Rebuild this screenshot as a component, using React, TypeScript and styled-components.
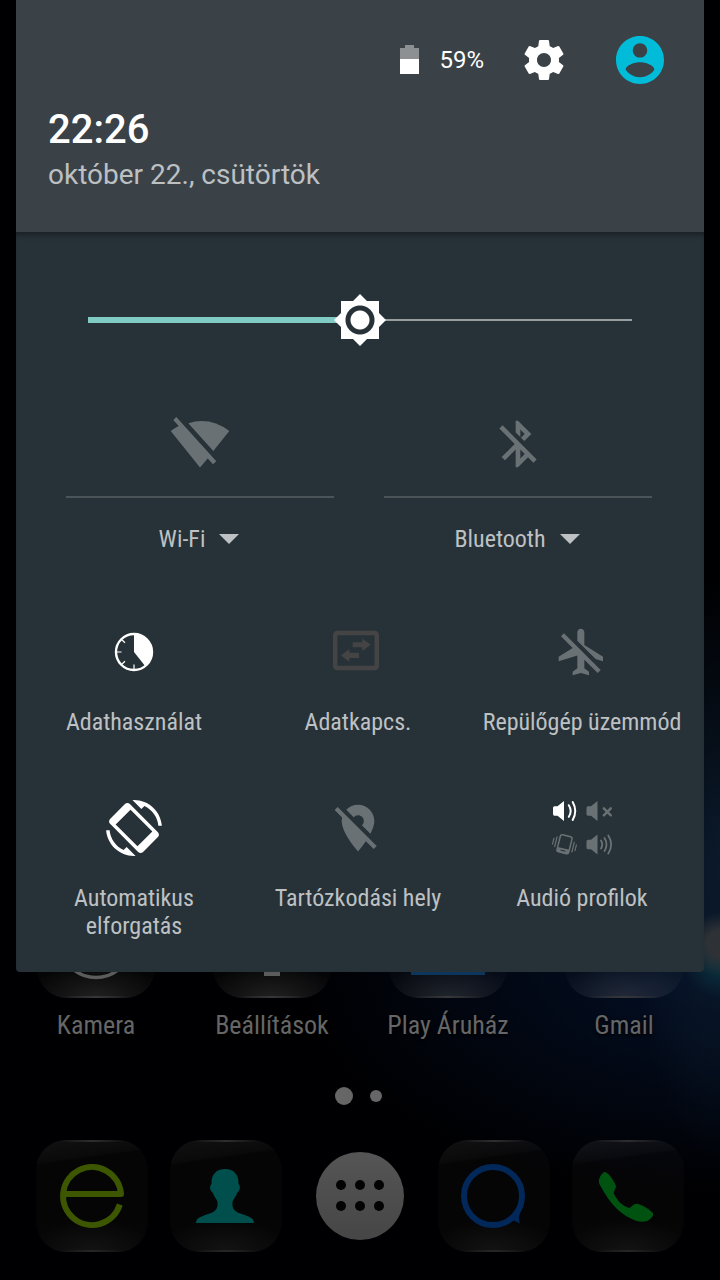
import React, { useState } from "react";
import styled, { createGlobalStyle } from "styled-components";

const colors = {
  header: "#3a4248",
  body: "#273238",
  accent: "#80cbc4",
  avatar: "#00bcd9",
  label: "#bec1c3",
  off: "#6a7174",
  unavailable: "#444445",
  launcher: "#666666",
};

const condensed = '"Roboto Condensed", Roboto, "Liberation Sans", sans-serif';

const GlobalStyle = createGlobalStyle`
  *, *::before, *::after { box-sizing: border-box; }
  body { margin: 0; background: #000; font-family: Roboto, "Liberation Sans", sans-serif; }
  button { margin: 0; padding: 0; border: 0; background: none; color: inherit; font: inherit; cursor: pointer; }
  svg { display: block; flex: none; }
`;

const Screen = styled.div`
  min-height: 100vh;
  display: flex;
  flex-direction: column;
  overflow: hidden;
  background:
    radial-gradient(circle 32px at 100% 944px, #2e3236 0 40%, transparent 100%),
    radial-gradient(circle 36px at 100% 962px, #0a2f3c 0 20%, transparent 100%),
    radial-gradient(ellipse 90px 290px at 100% 870px, #0b1a2b, transparent 100%),
    radial-gradient(ellipse 420px 220px at 100% 970px, #041027, transparent 100%),
    #000002;
`;

const Shade = styled.section`
  margin: 0 16px;
  border-radius: 0 0 4px 4px;
  overflow: hidden;
  background: ${colors.body};
`;

const ShadeHeader = styled.header`
  padding: 36px 40px 41px 32px;
  background: ${colors.header};
`;

const StatusRow = styled.div`
  display: flex;
  justify-content: flex-end;
  align-items: center;
  height: 48px;
`;

const Battery = styled.div`
  display: flex;
  align-items: center;
  gap: 20px;
  margin-right: 36px;
  color: #fff;
  font-size: 24px;
  line-height: 28px;
`;

const HeaderButton = styled.button`
  width: 48px;
  height: 48px;
  color: ${(p) => p.color};

  & + & { margin-left: 48px; }
`;

const Clock = styled.time`
  display: block;
  margin-top: 21px;
  color: #fff;
  font-size: 40px;
  font-weight: 500;
  line-height: 50px;
`;

const DateText = styled.div`
  margin-top: 4px;
  color: #bdc0c3;
  font-size: 28px;
  line-height: 32px;
`;

const ShadeBody = styled.div`
  padding: 62px 0 32px;
  box-shadow: inset 0 6px 6px -3px rgba(0, 0, 0, 0.35);
`;

const BrightnessRow = styled.div`
  padding: 0 72px;
`;

const BrightnessSlider = styled.input<{ $fill: number }>`
  appearance: none;
  display: block;
  width: 100%;
  height: 52px;
  margin: 0;
  background:
    linear-gradient(${colors.accent}, ${colors.accent}) left center / ${(p) => p.$fill}% 6px no-repeat,
    linear-gradient(#999ea1, #999ea1) left center / 100% 2px no-repeat;

  &::-webkit-slider-thumb {
    appearance: none;
    width: 52px;
    height: 52px;
    background: radial-gradient(circle, #fff 9px, ${colors.body} 10px, ${colors.body} 14px, #fff 15px);
    clip-path: polygon(
      26px 0, 33px 7px, 45px 7px, 45px 19px, 52px 26px, 45px 33px, 45px 45px, 33px 45px,
      26px 52px, 19px 45px, 7px 45px, 7px 33px, 0 26px, 7px 19px, 7px 7px, 19px 7px
    );
  }
`;

const DualTiles = styled.div`
  display: grid;
  grid-template-columns: 1fr 1fr;
  gap: 50px;
  margin-top: 66px;
  padding: 0 52px 0 50px;
`;

const DualTile = styled.div`
  display: flex;
  flex-direction: column;
  align-items: center;
`;

const DualToggle = styled.button`
  display: flex;
  justify-content: center;
  width: 100%;
  padding-bottom: 20px;
  border-bottom: 2px solid #4a5459;
`;

const DualLabel = styled.button`
  display: flex;
  align-items: center;
  gap: 14px;
  margin-top: 27px;
  padding-right: 2px;
  color: ${colors.label};
  font-family: ${condensed};
  font-size: 24px;
  line-height: 28px;
`;

const TileGrid = styled.div`
  display: grid;
  grid-template-columns: repeat(3, 1fr);
  row-gap: 60px;
  margin-top: 67px;
  padding: 0 10px 0 6px;
`;

const Tile = styled.button`
  display: flex;
  flex-direction: column;
  align-items: center;
  gap: 24px;
  padding: 0 8px;
`;

const IconBox = styled.span<{ $tone: string }>`
  display: flex;
  align-items: center;
  justify-content: center;
  width: 64px;
  height: 64px;
  color: ${(p) => p.$tone};
`;

const TileLabel = styled.span`
  color: ${colors.label};
  font-family: ${condensed};
  font-size: 24px;
  line-height: 28px;
`;

const AppRow = styled.div`
  display: grid;
  grid-template-columns: repeat(4, 1fr);
  padding: 0 8px;
`;

const AppShortcut = styled.button`
  display: flex;
  flex-direction: column;
  align-items: center;
  gap: 11px;
  color: ${colors.launcher};
  font-family: ${condensed};
  font-size: 26px;
  line-height: 32px;
  white-space: nowrap;
  text-shadow: 0 2px 3px #000;
`;

const IconPeek = styled.span`
  display: flex;
  align-items: flex-end;
  height: 26px;
  overflow: hidden;
`;

const GlassIcon = styled.span<{ $size: number; $sheen?: boolean }>`
  display: block;
  flex: none;
  width: ${(p) => p.$size}px;
  height: ${(p) => p.$size}px;
  border-radius: 30px;
  overflow: hidden;
  background:
    linear-gradient(90deg, transparent 20%, ${(p) => (p.$sheen ? "#262628" : "#38383a")} 50%, transparent 80%) bottom / 100% 2px no-repeat,
    linear-gradient(90deg, transparent 20%, ${(p) => (p.$sheen ? "#2e2e30" : "transparent")} 50%, transparent 80%) top / 100% 2px no-repeat,
    linear-gradient(172deg, rgba(255, 255, 255, 0.05), rgba(255, 255, 255, 0.02) 18%, transparent 20%),
    radial-gradient(ellipse 60% 30% at 50% 100%, rgba(255, 255, 255, ${(p) => (p.$sheen ? 0.06 : 0.11)}), transparent),
    rgba(255, 255, 255, 0.02);
`;

const Pager = styled.div`
  display: flex;
  justify-content: center;
  margin-top: 39px;
`;

const PageDot = styled.button<{ $size: number }>`
  display: grid;
  place-items: center;
  width: 32px;
  height: 32px;

  &::before {
    content: "";
    width: ${(p) => p.$size}px;
    height: ${(p) => p.$size}px;
    border-radius: 50%;
    background: ${colors.launcher};
  }
`;

const Dock = styled.nav`
  display: grid;
  grid-template-columns: repeat(5, 1fr);
  align-items: center;
  justify-items: center;
  margin-top: 28px;
  padding: 0 25px 28px;
`;

const DrawerButton = styled.button`
  width: 88px;
  height: 88px;
  border-radius: 50%;
  background: linear-gradient(#555, #464646);
`;

const MaterialIcon = ({ size, box = "0 0 24 24", d }: { size: number; box?: string; d: string }) => (
  <svg width={size} height={size} viewBox={box} fill="currentColor" aria-hidden="true">
    <path fillRule="evenodd" d={d} />
  </svg>
);

const paths = {
  settings:
    "M19.43 12.98c.04-.32.07-.64.07-.98s-.03-.66-.07-.98l2.11-1.65c.19-.15.24-.42.12-.64l-2-3.46c-.12-.22-.39-.3-.61-.22l-2.49 1c-.52-.4-1.08-.73-1.69-.98l-.38-2.65C14.46 2.18 14.25 2 14 2h-4c-.25 0-.46.18-.49.42l-.38 2.65c-.61.25-1.17.59-1.69.98l-2.49-1c-.23-.09-.49 0-.61.22l-2 3.46c-.13.22-.07.49.12.64l2.11 1.65c-.04.32-.07.65-.07.98s.03.66.07.98l-2.11 1.65c-.19.15-.24.42-.12.64l2 3.46c.12.22.39.3.61.22l2.49-1c.52.4 1.08.73 1.69.98l.38 2.65c.03.24.24.42.49.42h4c.25 0 .46-.18.49-.42l.38-2.65c.61-.25 1.17-.59 1.69-.98l2.49 1c.23.09.49 0 .61-.22l2-3.46c.12-.22.07-.49-.12-.64l-2.11-1.65zM12 15.5c-1.93 0-3.5-1.57-3.5-3.5s1.57-3.5 3.5-3.5 3.5 1.57 3.5 3.5-1.57 3.5-3.5 3.5z",
  account:
    "M12 2C6.48 2 2 6.48 2 12s4.48 10 10 10 10-4.48 10-10S17.52 2 12 2zm0 3c1.66 0 3 1.34 3 3s-1.34 3-3 3-3-1.34-3-3 1.34-3 3-3zm0 14.2c-2.5 0-4.71-1.28-6-3.22.03-1.99 4-3.08 6-3.08 1.99 0 5.97 1.09 6 3.08-1.29 1.94-3.5 3.22-6 3.22z",
  bluetoothOff:
    "M13 5.83l1.88 1.88-1.6 1.6 1.41 1.41 3.02-3.02L12 2h-1v5.03l2 2v-3.2zM5.41 4L4 5.41 10.59 12 5 17.59 6.41 19 11 14.41V22h1l4.29-4.29 2.3 2.29L20 18.59 5.41 4zM13 18.17v-3.76l1.88 1.88L13 18.17z",
  airplaneOff:
    "M13 9V3.5c0-.83-.67-1.5-1.5-1.5S10 2.67 10 3.5v3.68l7.83 7.83L21 16v-2l-8-5zM3 5.27l4.99 4.99L2 14v2l8-2.5V19l-2 1.5V22l3.5-1 3.5 1v-1.5L13 19v-3.73L18.73 21 20 19.73 4.27 4 3 5.27z",
  locationOff:
    "M12 6.5c1.38 0 2.5 1.12 2.5 2.5 0 .74-.33 1.39-.83 1.85l3.63 3.63c.98-1.86 1.7-3.8 1.7-5.48 0-3.87-3.13-7-7-7-1.98 0-3.76.83-5.04 2.15l3.19 3.19c.46-.52 1.11-.84 1.85-.84zm4.37 9.6l-4.63-4.63-.11-.11L3.27 3 2 4.27l3.18 3.18C5.07 7.95 5 8.47 5 9c0 5.25 7 13 7 13s1.67-1.85 3.38-4.35L18.73 21 20 19.73l-3.63-3.63z",
  rotation:
    "M16.48 2.52c3.27 1.55 5.61 4.72 5.97 8.48h1.5C23.44 4.84 18.29 0 12 0l-.66.03 3.81 3.81 1.33-1.32zm-6.25-.77c-.59-.59-1.54-.59-2.12 0L1.75 8.11c-.59.59-.59 1.54 0 2.12l12.02 12.02c.59.59 1.54.59 2.12 0l6.36-6.36c.59-.59.59-1.54 0-2.12L10.23 1.75zM10.5 4.15L19.85 13.5 13.5 19.85 4.15 10.5 10.5 4.15zM7.52 21.48C4.25 19.94 1.91 16.76 1.55 13H.05C.56 19.16 5.71 24 12 24l.66-.03-3.81-3.81-1.33 1.32z",
};

const BatteryIcon = () => (
  <svg width="19" height="30" viewBox="0 0 19 30" aria-hidden="true">
    <path fill="#8c9093" d="M5 0h9v3h5v11H0V3h5z" />
    <path fill="#fff" d="M0 14h19v15H0z" />
  </svg>
);

const WifiOffIcon = () => (
  <svg width="64" height="64" viewBox="0 0 64 64" fill="currentColor" aria-hidden="true">
    <path d="M20.3 11.2Q42 4.500 61.300 19L45.300 39z" />
    <path d="M8.300 5L48.300 49.300 45 52.300 39.700 46.500 32 55.500 2.700 19Q6.500 16 10.700 13.900L5.300 8z" />
  </svg>
);

const DataUsageIcon = () => (
  <svg width="64" height="64" viewBox="0 0 64 64" fill="none" stroke="currentColor" aria-hidden="true">
    <circle cx="32" cy="32" r="18" strokeWidth="2.400" />
    <path stroke="none" fill="currentColor" d="M32 13.500A18.500 18.500 0 0 1 43.500 46.500L32 32z" />
    <path strokeWidth="1.200" d="M32 50v-5.500M14 32h5.500M19.500 19.500l3.500 3.200M19.500 44.500l3.500-3.200" />
  </svg>
);

const DataConnectionIcon = () => (
  <svg width="64" height="64" viewBox="0 0 64 64" fill="currentColor" aria-hidden="true">
    <rect x="9.200" y="13" width="41.600" height="35" rx="2" fill="none" stroke="currentColor" strokeWidth="4.500" />
    <path d="M26.700 22.200h9.600v-3.600l8.500 6.100-8.500 6.200v-3.600h-9.600zM33 38h-9.700v3.700L15 35.400l8.300-6.300v3.600H33z" />
  </svg>
);

const speaker = "M14 5v20L7.500 19.800H4.500Q3 19.800 3 18V12Q3 10.200 4.500 10.200H7.500z";

const AudioProfilesIcon = () => (
  <svg width="64" height="64" viewBox="0 0 64 64" fill="none" strokeWidth="2" strokeLinecap="round" aria-hidden="true">
    <g stroke="#fff">
      <path d={speaker} fill="#fff" stroke="none" />
      <path d="M18.800 9.200Q22.600 15 18.800 20.800M22.700 6Q27.800 15 22.700 24" />
    </g>
    <g stroke={colors.off}>
      <g transform="translate(33.500 0)">
        <path d={speaker} fill={colors.off} stroke="none" />
        <path strokeWidth="2.400" d="M20.300 12.300l7 7M27.300 12.300l-7 7" />
      </g>
      <g transform="translate(33.500 33.500)">
        <path d={speaker} fill={colors.off} stroke="none" />
        <path strokeWidth="1.800" d="M17.500 11Q20 15 17.500 19M21 8.500Q25 15 21 21.500M24.800 6Q30.500 15 24.800 24" />
      </g>
      <g transform="rotate(14 14.500 48.300)" strokeWidth="1.500">
        <rect x="8.500" y="39.500" width="12" height="17.500" rx="2" />
        <path fill={colors.off} fillRule="evenodd" stroke="none" d="M8.500 52.500h12v4.500h-12zM12 54.200v1.200h5v-1.200z" />
        <path strokeWidth="1.200" d="M5.500 43v10M2.800 45v6M23.500 44v10M26.200 46v6" />
      </g>
    </g>
  </svg>
);

const CaretIcon = () => (
  <svg width="20" height="10" viewBox="0 0 20 10" fill="currentColor" aria-hidden="true">
    <path d="M0 0h20L10 10z" />
  </svg>
);

const smallTiles = [
  { label: "Adathasználat", tone: "#fff", icon: <DataUsageIcon /> },
  { label: "Adatkapcs.", tone: colors.unavailable, icon: <DataConnectionIcon /> },
  { label: "Repülőgép üzemmód", tone: colors.off, icon: <MaterialIcon size={56} d={paths.airplaneOff} /> },
  { label: "Automatikus elforgatás", tone: "#fff", icon: <MaterialIcon size={56} d={paths.rotation} /> },
  { label: "Tartózkodási hely", tone: colors.off, icon: <MaterialIcon size={56} d={paths.locationOff} /> },
  { label: "Audió profilok", tone: colors.off, icon: <AudioProfilesIcon /> },
];

const apps = [
  { label: "Kamera", art: <circle cx="59" cy="62" r="35.500" fill="none" stroke="#5c5c5c" strokeWidth="3.500" /> },
  { label: "Beállítások", art: <path fill="#5c5c5c" d="M51 80h16v16H51z" /> },
  { label: "Play Áruház", art: <path fill="#0d365c" d="M22 80h74v15H22z" /> },
  { label: "Gmail", art: null },
];

const dockLeft = [
  {
    label: "Böngésző",
    art: <path fill="none" stroke="#3d5700" strokeWidth="6" strokeLinejoin="round" d="M27 54H85A29 29 0 1 0 83.800 64.500" />,
  },
  {
    label: "Névjegyek",
    art: (
      <path
        fill="#004f4c"
        d="M55 29C64 29 69 35 68.500 44C71 46 70 51 67 53C66 57 63 59 62.500 62C62 68 64 71 69 73C77 76 84 77 84 83H26C26 77 33 76 41 73C46 71 48 68 47.500 62C47 59 44 57 43 53C40 51 39 46 41.500 44C41 35 46 29 55 29Z"
      />
    ),
  },
];

const dockRight = [
  {
    label: "Üzenetek",
    art: (
      <>
        <circle cx="55" cy="56" r="29" fill="none" stroke="#02285a" strokeWidth="6" />
        <path fill="#02285a" d="M71 79Q76 80 82 83.500Q80 78 82 73z" />
      </>
    ),
  },
  {
    label: "Telefon",
    art: (
      <path
        fill="#005210"
        d="M33 32C37 33 42 41 44 46C44 49 41 51 42 54C45 61 51 66 57 68C60 67 62 63 66 64C71 65 78 70 81 73C82 76 78 80 75 81C71 82 66 82 62 80C52 76 44 69 38 61C33 54 29 47 27 43C26 39 30 32 33 32Z"
      />
    ),
  },
];

const DockItem = ({ label, art }: { label: string; art: React.ReactNode }) => (
  <button aria-label={label}>
    <GlassIcon $size={112} $sheen>
      <svg width="112" height="112" viewBox="0 0 112 112" aria-hidden="true">{art}</svg>
    </GlassIcon>
  </button>
);

export default function App() {
  const [brightness, setBrightness] = useState(50);

  return (
    <Screen>
      <GlobalStyle />
      <Shade>
        <ShadeHeader>
          <StatusRow>
            <Battery>
              <BatteryIcon />
              59%
            </Battery>
            <HeaderButton color="#fff" aria-label="Beállítások">
              <MaterialIcon size={48} d={paths.settings} />
            </HeaderButton>
            <HeaderButton color={colors.avatar} aria-label="Felhasználó">
              <MaterialIcon size={48} box="2 2 20 20" d={paths.account} />
            </HeaderButton>
          </StatusRow>
          <Clock>22:26</Clock>
          <DateText>október 22., csütörtök</DateText>
        </ShadeHeader>

        <ShadeBody>
          <BrightnessRow>
            <BrightnessSlider
              type="range"
              aria-label="Fényerő"
              min={0}
              max={100}
              value={brightness}
              $fill={brightness}
              onChange={(e) => setBrightness(Number(e.target.value))}
            />
          </BrightnessRow>

          <DualTiles>
            <DualTile>
              <DualToggle aria-label="Wi-Fi">
                <IconBox $tone={colors.off}><WifiOffIcon /></IconBox>
              </DualToggle>
              <DualLabel>Wi-Fi<CaretIcon /></DualLabel>
            </DualTile>
            <DualTile>
              <DualToggle aria-label="Bluetooth">
                <IconBox $tone={colors.off}><MaterialIcon size={56} d={paths.bluetoothOff} /></IconBox>
              </DualToggle>
              <DualLabel>Bluetooth<CaretIcon /></DualLabel>
            </DualTile>
          </DualTiles>

          <TileGrid>
            {smallTiles.map((tile) => (
              <Tile key={tile.label}>
                <IconBox $tone={tile.tone}>{tile.icon}</IconBox>
                <TileLabel>{tile.label}</TileLabel>
              </Tile>
            ))}
          </TileGrid>
        </ShadeBody>
      </Shade>

      <AppRow>
        {apps.map((app) => (
          <AppShortcut key={app.label}>
            <IconPeek>
              <GlassIcon $size={118}>
                <svg width="118" height="118" viewBox="0 0 118 118" aria-hidden="true">{app.art}</svg>
              </GlassIcon>
            </IconPeek>
            {app.label}
          </AppShortcut>
        ))}
      </AppRow>

      <Pager>
        <PageDot $size={18} aria-label="1. oldal" />
        <PageDot $size={12} aria-label="2. oldal" />
      </Pager>

      <Dock>
        {dockLeft.map((item) => <DockItem key={item.label} {...item} />)}
        <DrawerButton aria-label="Alkalmazások">
          <svg width="88" height="88" viewBox="0 0 88 88" fill="#030303" aria-hidden="true">
            {[33, 54].map((y) => [25, 44, 63].map((x) => <circle key={`${x}-${y}`} cx={x} cy={y} r="5" />))}
          </svg>
        </DrawerButton>
        {dockRight.map((item) => <DockItem key={item.label} {...item} />)}
      </Dock>
    </Screen>
  );
}
